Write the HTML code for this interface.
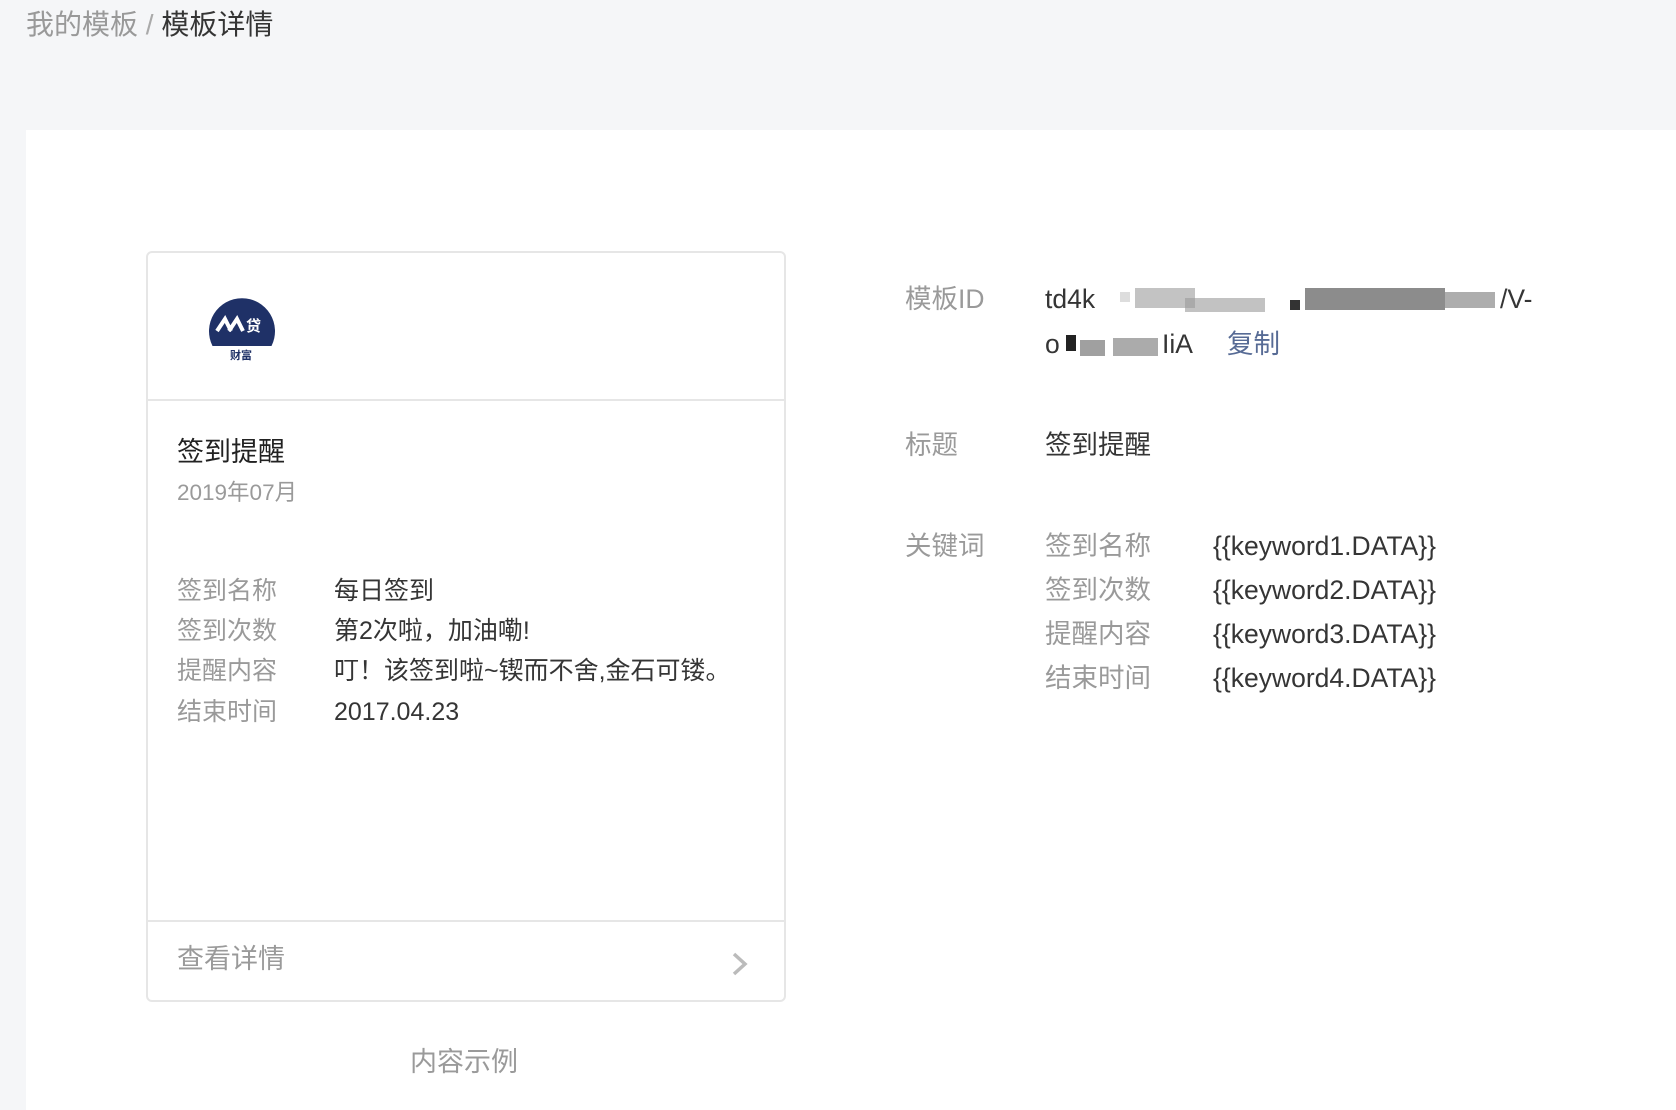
<!DOCTYPE html>
<html><head><meta charset="utf-8"><style>
*{margin:0;padding:0;box-sizing:border-box}
body{width:1676px;height:1096px;background:#f5f6f8;font-family:"Liberation Sans","Noto Sans CJK SC",sans-serif;position:relative;overflow:hidden;color:#353535}
.a{position:absolute;white-space:nowrap;line-height:1}
.panel{position:absolute;left:26px;top:130px;width:1660px;height:980px;background:#fff}
.card{position:absolute;left:146px;top:251px;width:640px;height:751px;border:2px solid #e6e6e6;border-radius:6px;background:#fff}
.g{color:#9a9a9a}
.px{position:absolute;}
.r{font-size:26.5px}
</style></head><body>
<div class="a" style="left:26px;top:11px;font-size:28px;color:#999">我的模板 <span style="color:#aaa">/</span> <span style="color:#353535">模板详情</span></div>
<div class="panel"></div>
<div class="card">
  <div style="position:absolute;left:0;right:0;top:146px;border-top:2px solid #e6e6e6"></div>
  <svg style="position:absolute;left:54px;top:41px" width="80" height="80" viewBox="0 0 80 80">
    <path d="M10.5 52 A33 33 0 1 1 69.5 52 Z" fill="#1f3167"/>
    <path d="M15 37 L23 25 L29 37 M27 37 L35 25 L41 37" stroke="#fff" stroke-width="4" fill="none"/>
    <text x="44" y="37" font-size="15" fill="#fff" font-weight="bold" font-family="Noto Sans CJK SC">贷</text>
    <text x="28" y="65" font-size="11" fill="#1f3167" font-weight="bold" font-family="Noto Sans CJK SC">财富</text>
  </svg>
  <div class="a" style="left:29px;top:186px;font-size:27px;color:#222">签到提醒</div>
  <div class="a g" style="left:29px;top:229px;font-size:22.5px">2019年07月</div>
  <div class="a g" style="left:29px;top:326px;font-size:25px">签到名称</div>
  <div class="a" style="left:186px;top:326px;font-size:25px">每日签到</div>
  <div class="a g" style="left:29px;top:366px;font-size:25px">签到次数</div>
  <div class="a" style="left:186px;top:366px;font-size:25px">第2次啦，加油嘞!</div>
  <div class="a g" style="left:29px;top:406px;font-size:25px">提醒内容</div>
  <div class="a" style="left:186px;top:406px;font-size:25px">叮！该签到啦~锲而不舍,金石可镂。</div>
  <div class="a g" style="left:29px;top:447px;font-size:25px">结束时间</div>
  <div class="a" style="left:186px;top:447px;font-size:25px">2017.04.23</div>
  <div style="position:absolute;left:0;right:0;top:667px;border-top:2px solid #e6e6e6"></div>
  <div class="a g" style="left:29px;top:693px;font-size:27px">查看详情</div>
  <svg style="position:absolute;left:582px;top:697px" width="20" height="30" viewBox="0 0 20 30"><path d="M4 4 L15 14 L4 24" stroke="#bbb" stroke-width="3.5" fill="none"/></svg>
</div>
<div class="a g" style="left:410px;top:1049px;font-size:27px">内容示例</div>

<div class="a g r" style="left:905px;top:286px">模板ID</div>
<div class="a r" style="left:1045px;top:286px">td4k</div>
<div class="px" style="left:1120px;top:292px;width:10px;height:10px;background:#ddd"></div>
<div class="px" style="left:1135px;top:288px;width:60px;height:20px;background:#aaa;opacity:.7"></div>
<div class="px" style="left:1185px;top:298px;width:80px;height:14px;background:#999;opacity:.6"></div>
<div class="px" style="left:1290px;top:300px;width:10px;height:10px;background:#333"></div>
<div class="px" style="left:1305px;top:288px;width:140px;height:22px;background:#666;opacity:.75"></div>
<div class="px" style="left:1445px;top:292px;width:50px;height:16px;background:#777;opacity:.6"></div>
<div class="a r" style="left:1500px;top:286px">/V-</div>
<div class="a r" style="left:1045px;top:331px">o</div>
<div class="px" style="left:1066px;top:335px;width:10px;height:16px;background:#222"></div>
<div class="px" style="left:1080px;top:340px;width:25px;height:16px;background:#777;opacity:.7"></div>
<div class="px" style="left:1113px;top:338px;width:45px;height:18px;background:#888;opacity:.7"></div>
<div class="a r" style="left:1162px;top:331px">IiA</div>
<div class="a r" style="left:1227px;top:331px;color:#576b95">复制</div>

<div class="a g r" style="left:905px;top:432px">标题</div>
<div class="a r" style="left:1045px;top:432px">签到提醒</div>

<div class="a g r" style="left:905px;top:533px">关键词</div>
<div class="a g r" style="left:1045px;top:533px">签到名称</div>
<div class="a r" style="left:1213px;top:533px">{{keyword1.DATA}}</div>
<div class="a g r" style="left:1045px;top:577px">签到次数</div>
<div class="a r" style="left:1213px;top:577px">{{keyword2.DATA}}</div>
<div class="a g r" style="left:1045px;top:621px">提醒内容</div>
<div class="a r" style="left:1213px;top:621px">{{keyword3.DATA}}</div>
<div class="a g r" style="left:1045px;top:665px">结束时间</div>
<div class="a r" style="left:1213px;top:665px">{{keyword4.DATA}}</div>
</body></html>
